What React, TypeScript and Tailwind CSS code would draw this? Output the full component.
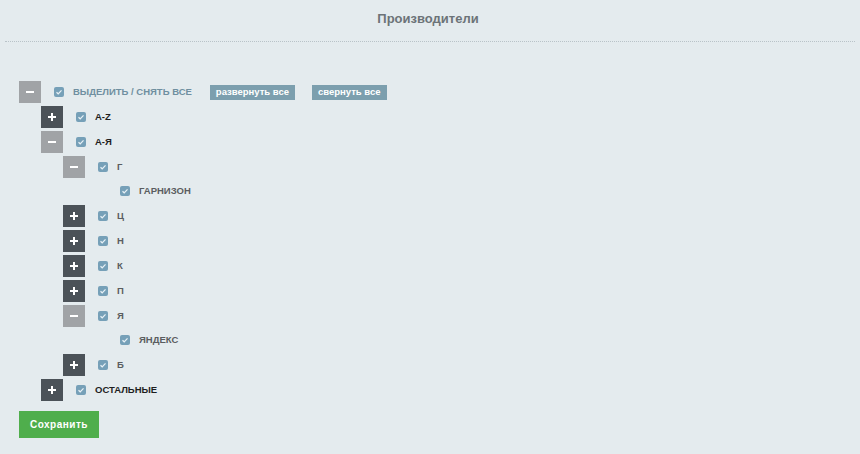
import React from "react";

type Node = {
  label: string;
  level: number;
  toggle?: "plus" | "minus";
  tone: "root" | "dark" | "gray";
};

const rows: Node[] = [
  { label: "A-Z", level: 1, toggle: "plus", tone: "dark" },
  { label: "А-Я", level: 1, toggle: "minus", tone: "dark" },
  { label: "Г", level: 2, toggle: "minus", tone: "gray" },
  { label: "ГАРНИЗОН", level: 3, tone: "gray" },
  { label: "Ц", level: 2, toggle: "plus", tone: "gray" },
  { label: "Н", level: 2, toggle: "plus", tone: "gray" },
  { label: "К", level: 2, toggle: "plus", tone: "gray" },
  { label: "П", level: 2, toggle: "plus", tone: "gray" },
  { label: "Я", level: 2, toggle: "minus", tone: "gray" },
  { label: "ЯНДЕКС", level: 3, tone: "gray" },
  { label: "Б", level: 2, toggle: "plus", tone: "gray" },
  { label: "ОСТАЛЬНЫЕ", level: 1, toggle: "plus", tone: "dark" },
];

function Toggle({ kind }: { kind?: "plus" | "minus" }) {
  if (!kind) return <span className="w-[22px] h-[22px] shrink-0" />;
  const bg = kind === "plus" ? "bg-[#4b5258]" : "bg-[#a0a3a6]";
  return (
    <span className={`w-[22px] h-[22px] shrink-0 flex items-center justify-center ${bg}`}>
      <svg width="10" height="10" viewBox="0 0 10 10">
        <rect x="1" y="4" width="8" height="2" fill="#fff" />
        {kind === "plus" && <rect x="4" y="1" width="2" height="8" fill="#fff" />}
      </svg>
    </span>
  );
}

function Check() {
  return (
    <span className="w-[10px] h-[10px] shrink-0 rounded-[2px] bg-[#76a0b8] flex items-center justify-center ml-[13px]">
      <svg width="8" height="8" viewBox="0 0 8 8">
        <path d="M1.5 4.2 L3.2 5.8 L6.5 2.3" stroke="#e8f1f6" strokeWidth="1.2" fill="none" />
      </svg>
    </span>
  );
}

export default function App() {
  const font = { fontFamily: '"Liberation Sans", Arial, sans-serif' };
  return (
    <div className="w-[860px] h-[454px] bg-[#e4ebee] overflow-hidden" style={font}>
      <div className="px-[5px]">
        <div className="h-[42px] border-b border-dotted border-[#b9c3c8] flex items-center justify-center pb-[3px] pr-[4px]">
          <span className="text-[13px] font-bold text-[#6c7378]">Производители</span>
        </div>
      </div>
      <div className="pl-[19px] pt-[39px]">
        <div className="flex items-center h-[22px]">
          <Toggle kind="minus" />
          <Check />
          <span className="ml-[9px] text-[9.5px] font-bold text-[#6f8fa0]">ВЫДЕЛИТЬ / СНЯТЬ ВСЕ</span>
          <span className="ml-[18px] h-[15px] px-[6px] bg-[#7c9fae] text-white text-[9.5px] font-bold flex items-center">развернуть все</span>
          <span className="ml-[17px] h-[15px] px-[6px] bg-[#7c9fae] text-white text-[9.5px] font-bold flex items-center">свернуть все</span>
        </div>
        {rows.map((r, i) => (
          <div
            key={i}
            className={`flex items-center h-[22px] ${r.toggle ? "mt-[3px]" : "mt-[2px]"}`}
            style={{ paddingLeft: r.level * 22 }}
          >
            <Toggle kind={r.toggle} />
            <Check />
            <span
              className={`ml-[9px] text-[9.5px] font-bold ${r.tone === "dark" ? "text-[#1e1e1e]" : "text-[#5a5d60]"}`}
            >
              {r.label}
            </span>
          </div>
        ))}
        <button className="mt-[10px] w-[80px] h-[27px] bg-[#4fae4c] text-white text-[10px] font-bold tracking-[0.5px]">
          Сохранить
        </button>
      </div>
    </div>
  );
}
